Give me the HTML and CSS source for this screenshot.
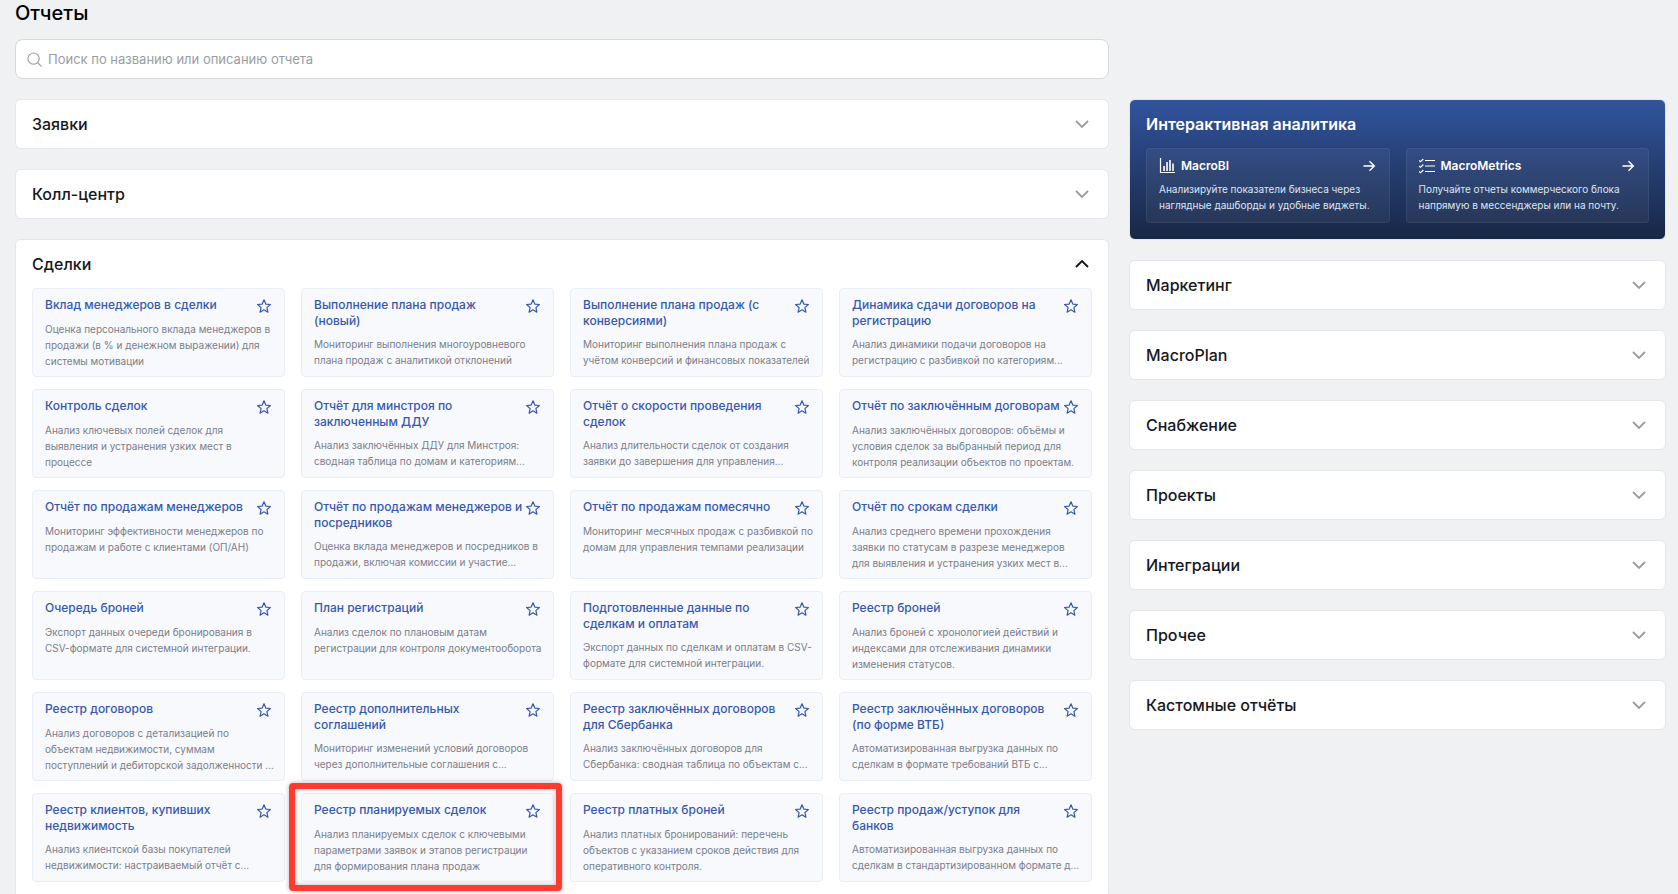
FILE: index.html
```
<!DOCTYPE html>
<html lang="ru">
<head>
    <meta charset="UTF-8">
    <meta name="viewport" content="width=device-width, initial-scale=1.0">
    <title>Отчеты</title>
    <link rel="stylesheet" href="styles.css">
</head>
<body>
    <svg class="sprite" aria-hidden="true">
        <symbol id="star" viewBox="0 0 16 16">
            <path d="M8 1.800l1.800 4.300 4.600.4-3.500 3.100 1 4.600L8 11.800l-3.900 2.400 1-4.600-3.500-3.100 4.600-.4z" fill="none" stroke="currentColor" stroke-width="1.200" stroke-linejoin="round"/>
        </symbol>
        <symbol id="chevron" viewBox="0 0 16 16">
            <path d="M2 5l6 6 6-6" fill="none" stroke="currentColor" stroke-width="1.800"/>
        </symbol>
        <symbol id="arrow" viewBox="0 0 16 16">
            <path d="M2.500 8h10.500M8.500 3.200L13.300 8l-4.800 4.800" fill="none" stroke="currentColor" stroke-width="1.400"/>
        </symbol>
    </svg>

    <main class="page">
        <h1>Отчеты</h1>
        <div class="layout">
            <div class="search">
                <svg class="search-icon" viewBox="0 0 16 16" aria-hidden="true"><circle cx="7" cy="7" r="6" fill="none" stroke="currentColor" stroke-width="1.200"/><path d="M11.200 11.200l4.300 4.300" stroke="currentColor" stroke-width="1.200"/></svg>
                <input type="search" aria-label="Поиск по отчетам" placeholder="Поиск по названию или описанию отчета">
            </div>

            <div class="column">
                <section class="panel">
                    <button class="panel-head" type="button" aria-expanded="false">Заявки <svg><use href="#chevron"/></svg></button>
                </section>
                <section class="panel">
                    <button class="panel-head" type="button" aria-expanded="false">Колл-центр <svg><use href="#chevron"/></svg></button>
                </section>
                <section class="panel">
                    <button class="panel-head" type="button" aria-expanded="true">Сделки <svg><use href="#chevron"/></svg></button>
                    <div class="reports">
                        <article class="report">
                            <div class="report-head"><a href="#">Вклад менеджеров в сделки</a><button class="fav" type="button" aria-label="В избранное"><svg><use href="#star"/></svg></button></div>
                            <p>Оценка персонального вклада менеджеров в продажи (в % и денежном выражении) для системы мотивации</p>
                        </article>
                        <article class="report">
                            <div class="report-head"><a href="#">Выполнение плана продаж (новый)</a><button class="fav" type="button" aria-label="В избранное"><svg><use href="#star"/></svg></button></div>
                            <p>Мониторинг выполнения многоуровневого плана продаж с аналитикой отклонений</p>
                        </article>
                        <article class="report">
                            <div class="report-head"><a href="#">Выполнение плана продаж (с конверсиями)</a><button class="fav" type="button" aria-label="В избранное"><svg><use href="#star"/></svg></button></div>
                            <p>Мониторинг выполнения плана продаж с учётом конверсий и финансовых показателей</p>
                        </article>
                        <article class="report">
                            <div class="report-head"><a href="#">Динамика сдачи договоров на регистрацию</a><button class="fav" type="button" aria-label="В избранное"><svg><use href="#star"/></svg></button></div>
                            <p>Анализ динамики подачи договоров на регистрацию с разбивкой по категориям...</p>
                        </article>

                        <article class="report">
                            <div class="report-head"><a href="#">Контроль сделок</a><button class="fav" type="button" aria-label="В избранное"><svg><use href="#star"/></svg></button></div>
                            <p>Анализ ключевых полей сделок для<br>выявления и устранения узких мест в<br>процессе</p>
                        </article>
                        <article class="report">
                            <div class="report-head"><a href="#">Отчёт для минстроя по заключенным ДДУ</a><button class="fav" type="button" aria-label="В избранное"><svg><use href="#star"/></svg></button></div>
                            <p>Анализ заключённых ДДУ для Минстроя: сводная таблица по домам и категориям...</p>
                        </article>
                        <article class="report">
                            <div class="report-head"><a href="#">Отчёт о скорости проведения сделок</a><button class="fav" type="button" aria-label="В избранное"><svg><use href="#star"/></svg></button></div>
                            <p>Анализ длительности сделок от создания заявки до завершения для управления...</p>
                        </article>
                        <article class="report">
                            <div class="report-head"><a href="#">Отчёт по заключённым договорам</a><button class="fav" type="button" aria-label="В избранное"><svg><use href="#star"/></svg></button></div>
                            <p>Анализ заключённых договоров: объёмы и условия сделок за выбранный период для контроля реализации объектов по проектам.</p>
                        </article>

                        <article class="report">
                            <div class="report-head"><a href="#">Отчёт по продажам менеджеров</a><button class="fav" type="button" aria-label="В избранное"><svg><use href="#star"/></svg></button></div>
                            <p>Мониторинг эффективности менеджеров по продажам и работе с клиентами (ОП/АН)</p>
                        </article>
                        <article class="report">
                            <div class="report-head"><a href="#">Отчёт по продажам менеджеров и посредников</a><button class="fav" type="button" aria-label="В избранное"><svg><use href="#star"/></svg></button></div>
                            <p>Оценка вклада менеджеров и посредников в продажи, включая комиссии и участие...</p>
                        </article>
                        <article class="report">
                            <div class="report-head"><a href="#">Отчёт по продажам помесячно</a><button class="fav" type="button" aria-label="В избранное"><svg><use href="#star"/></svg></button></div>
                            <p>Мониторинг месячных продаж с разбивкой по домам для управления темпами реализации</p>
                        </article>
                        <article class="report">
                            <div class="report-head"><a href="#">Отчёт по срокам сделки</a><button class="fav" type="button" aria-label="В избранное"><svg><use href="#star"/></svg></button></div>
                            <p>Анализ среднего времени прохождения<br>заявки по статусам в разрезе менеджеров<br>для выявления и устранения узких мест в...</p>
                        </article>

                        <article class="report">
                            <div class="report-head"><a href="#">Очередь броней</a><button class="fav" type="button" aria-label="В избранное"><svg><use href="#star"/></svg></button></div>
                            <p>Экспорт данных очереди бронирования в<br>CSV-формате для системной интеграции.</p>
                        </article>
                        <article class="report">
                            <div class="report-head"><a href="#">План регистраций</a><button class="fav" type="button" aria-label="В избранное"><svg><use href="#star"/></svg></button></div>
                            <p>Анализ сделок по плановым датам регистрации для контроля документооборота</p>
                        </article>
                        <article class="report">
                            <div class="report-head"><a href="#">Подготовленные данные по сделкам и оплатам</a><button class="fav" type="button" aria-label="В избранное"><svg><use href="#star"/></svg></button></div>
                            <p>Экспорт данных по сделкам и оплатам в CSV-<br>формате для системной интеграции.</p>
                        </article>
                        <article class="report">
                            <div class="report-head"><a href="#">Реестр броней</a><button class="fav" type="button" aria-label="В избранное"><svg><use href="#star"/></svg></button></div>
                            <p>Анализ броней с хронологией действий и индексами для отслеживания динамики изменения статусов.</p>
                        </article>

                        <article class="report">
                            <div class="report-head"><a href="#">Реестр договоров</a><button class="fav" type="button" aria-label="В избранное"><svg><use href="#star"/></svg></button></div>
                            <p>Анализ договоров с детализацией по<br>объектам недвижимости, суммам<br>поступлений и дебиторской задолженности&nbsp;...</p>
                        </article>
                        <article class="report">
                            <div class="report-head"><a href="#">Реестр дополнительных соглашений</a><button class="fav" type="button" aria-label="В избранное"><svg><use href="#star"/></svg></button></div>
                            <p>Мониторинг изменений условий договоров через дополнительные соглашения с...</p>
                        </article>
                        <article class="report">
                            <div class="report-head"><a href="#">Реестр заключённых договоров для Сбербанка</a><button class="fav" type="button" aria-label="В избранное"><svg><use href="#star"/></svg></button></div>
                            <p>Анализ заключённых договоров для Сбербанка: сводная таблица по объектам с...</p>
                        </article>
                        <article class="report">
                            <div class="report-head"><a href="#">Реестр заключённых договоров (по форме ВТБ)</a><button class="fav" type="button" aria-label="В избранное"><svg><use href="#star"/></svg></button></div>
                            <p>Автоматизированная выгрузка данных по сделкам в формате требований ВТБ с...</p>
                        </article>

                        <article class="report">
                            <div class="report-head"><a href="#">Реестр клиентов, купивших недвижимость</a><button class="fav" type="button" aria-label="В избранное"><svg><use href="#star"/></svg></button></div>
                            <p>Анализ клиентской базы покупателей недвижимости: настраиваемый отчёт с...</p>
                        </article>
                        <article class="report marked">
                            <div class="report-head"><a href="#">Реестр планируемых сделок</a><button class="fav" type="button" aria-label="В избранное"><svg><use href="#star"/></svg></button></div>
                            <p>Анализ планируемых сделок с ключевыми<br>параметрами заявок и этапов регистрации<br>для формирования плана продаж</p>
                        </article>
                        <article class="report">
                            <div class="report-head"><a href="#">Реестр платных броней</a><button class="fav" type="button" aria-label="В избранное"><svg><use href="#star"/></svg></button></div>
                            <p>Анализ платных бронирований: перечень объектов с указанием сроков действия для оперативного контроля.</p>
                        </article>
                        <article class="report">
                            <div class="report-head"><a href="#">Реестр продаж/уступок для банков</a><button class="fav" type="button" aria-label="В избранное"><svg><use href="#star"/></svg></button></div>
                            <p>Автоматизированная выгрузка данных по сделкам в стандартизированном формате д...</p>
                        </article>
                    </div>
                </section>
            </div>

            <aside class="column">
                <section class="analytics">
                    <h2>Интерактивная аналитика</h2>
                    <div class="tiles">
                        <a class="tile" href="#">
                            <span class="tile-head">
                                <svg viewBox="0 0 16 16"><path d="M1.500 0v14.500H16" fill="none" stroke="currentColor" stroke-width="1.200"/><path d="M5 8v5M8 4v9M11 2v11M14 5.500v7.500" stroke="currentColor" stroke-width="1.600"/></svg>
                                <b>MacroBI</b>
                                <svg><use href="#arrow"/></svg>
                            </span>
                            <span>Анализируйте показатели бизнеса через наглядные дашборды и удобные виджеты.</span>
                        </a>
                        <a class="tile" href="#">
                            <span class="tile-head">
                                <svg viewBox="0 0 16 16"><path d="M6 2.500h10M6 8h10M6 13.500h10M0 2.500l1.500 1.300L4.300 1M0 8l1.500 1.300L4.300 6.500M0 13.500l1.500 1.300L4.300 12" fill="none" stroke="currentColor" stroke-width="1.200"/></svg>
                                <b>MacroMetrics</b>
                                <svg><use href="#arrow"/></svg>
                            </span>
                            <span>Получайте отчеты коммерческого блока напрямую в мессенджеры или на почту.</span>
                        </a>
                    </div>
                </section>
                <section class="panel">
                    <button class="panel-head" type="button" aria-expanded="false">Маркетинг <svg><use href="#chevron"/></svg></button>
                </section>
                <section class="panel">
                    <button class="panel-head" type="button" aria-expanded="false">MacroPlan <svg><use href="#chevron"/></svg></button>
                </section>
                <section class="panel">
                    <button class="panel-head" type="button" aria-expanded="false">Снабжение <svg><use href="#chevron"/></svg></button>
                </section>
                <section class="panel">
                    <button class="panel-head" type="button" aria-expanded="false">Проекты <svg><use href="#chevron"/></svg></button>
                </section>
                <section class="panel">
                    <button class="panel-head" type="button" aria-expanded="false">Интеграции <svg><use href="#chevron"/></svg></button>
                </section>
                <section class="panel">
                    <button class="panel-head" type="button" aria-expanded="false">Прочее <svg><use href="#chevron"/></svg></button>
                </section>
                <section class="panel">
                    <button class="panel-head" type="button" aria-expanded="false">Кастомные отчёты <svg><use href="#chevron"/></svg></button>
                </section>
            </aside>
        </div>
    </main>
</body>
</html>
```
FILE: styles.css
```
* {
    box-sizing: border-box;
}
body {
    font-family: Inter, "Liberation Sans", sans-serif;
    background-color: #f0f1f3;
    color: #16181d;
    margin: 0;
}
button {
    font-family: inherit;
    background: none;
    border: 0;
    padding: 0;
    cursor: pointer;
}
a {
    text-decoration: none;
}
.sprite {
    display: none;
}
.page {
    padding: 0 12px 0 15px;
}
h1 {
    margin: 0 0 13px;
    font-size: 20px;
    line-height: 26px;
    font-weight: 500;
    color: #000;
}
.layout {
    display: grid;
    grid-template-columns: 1094fr 537fr;
    gap: 20px;
    align-items: start;
}
.column {
    display: flex;
    flex-direction: column;
    gap: 20px;
}

/* search */
.search {
    grid-column: 1;
    display: flex;
    align-items: center;
    gap: 6px;
    height: 40px;
    padding: 0 11px;
    background-color: #fff;
    border: 1px solid #d6d9de;
    border-radius: 8px;
}
.layout > .column {
    grid-row: 2;
}
.search-icon {
    width: 15px;
    height: 15px;
    color: #9a9fa6;
}
.search input {
    flex: 1;
    border: 0;
    outline: 0;
    padding: 0;
    background: none;
    font-family: inherit;
    font-size: 13px;
}
.search input::placeholder {
    color: #999da3;
}

/* collapsible panels */
.panel {
    background-color: #fff;
    border: 1px solid #e4e6ea;
    border-radius: 6px;
}
.panel-head {
    display: flex;
    justify-content: space-between;
    align-items: center;
    width: 100%;
    height: 48px;
    padding: 0 18px 0 16px;
    font-size: 16px;
    font-weight: 500;
    color: #16181d;
}
.panel-head svg {
    width: 16px;
    height: 16px;
    color: #989ca4;
}
.panel-head[aria-expanded="true"] svg {
    transform: rotate(180deg);
    color: #111;
}

/* report cards */
.reports {
    display: grid;
    grid-template-columns: repeat(4, minmax(0, 1fr));
    gap: 12px 16px;
    padding: 0 16px 16px;
}
.report {
    position: relative;
    min-height: 89px;
    padding: 8px 4px 6px 12px;
    background-color: #f8f9fd;
    border: 1px solid #eaeef9;
    border-radius: 4px;
}
.report-head {
    display: flex;
    justify-content: space-between;
    align-items: flex-start;
    min-height: 17px;
    padding-right: 8px;
}
.report-head a {
    font-size: 12px;
    line-height: 16px;
    font-weight: 500;
    color: #3558ae;
}
.fav {
    flex: none;
    width: 16px;
    height: 17px;
    padding-top: 1px;
    color: #3558ae;
}
.fav svg {
    display: block;
    width: 16px;
    height: 16px;
}
.report p {
    margin: 7px 0 0;
    font-size: 10px;
    line-height: 16px;
    color: #7a7e89;
}
.marked::after {
    content: "";
    position: absolute;
    inset: -11px -9px -10px -13px;
    border: 6px solid #ff3b30;
    border-radius: 4px;
    box-shadow: 0 0 5px rgba(0, 0, 0, 0.3), inset 0 0 5px rgba(0, 0, 0, 0.3);
    pointer-events: none;
}

/* analytics banner */
.analytics {
    padding: 16px;
    border: 1px solid #e4e6ea;
    border-radius: 6px;
    background: linear-gradient(#31549d, #182745);
    color: #fff;
}
.analytics h2 {
    margin: 0 0 16px;
    font-size: 16px;
    line-height: 16px;
    font-weight: 600;
}
.tiles {
    display: grid;
    grid-template-columns: 1fr 1fr;
    gap: 16px;
}
.tile {
    padding: 9px 12px;
    border: 1px solid rgba(255, 255, 255, 0.06);
    border-radius: 4px;
    background-color: rgba(255, 255, 255, 0.05);
    font-size: 10px;
    line-height: 16px;
    color: #dfe5f3;
}
.tile-head {
    display: flex;
    align-items: center;
    gap: 6px;
    margin-bottom: 7px;
    color: #fff;
}
.tile-head b {
    flex: 1;
    font-size: 12px;
    font-weight: 600;
}
.tile-head svg {
    width: 16px;
    height: 16px;
}
```
